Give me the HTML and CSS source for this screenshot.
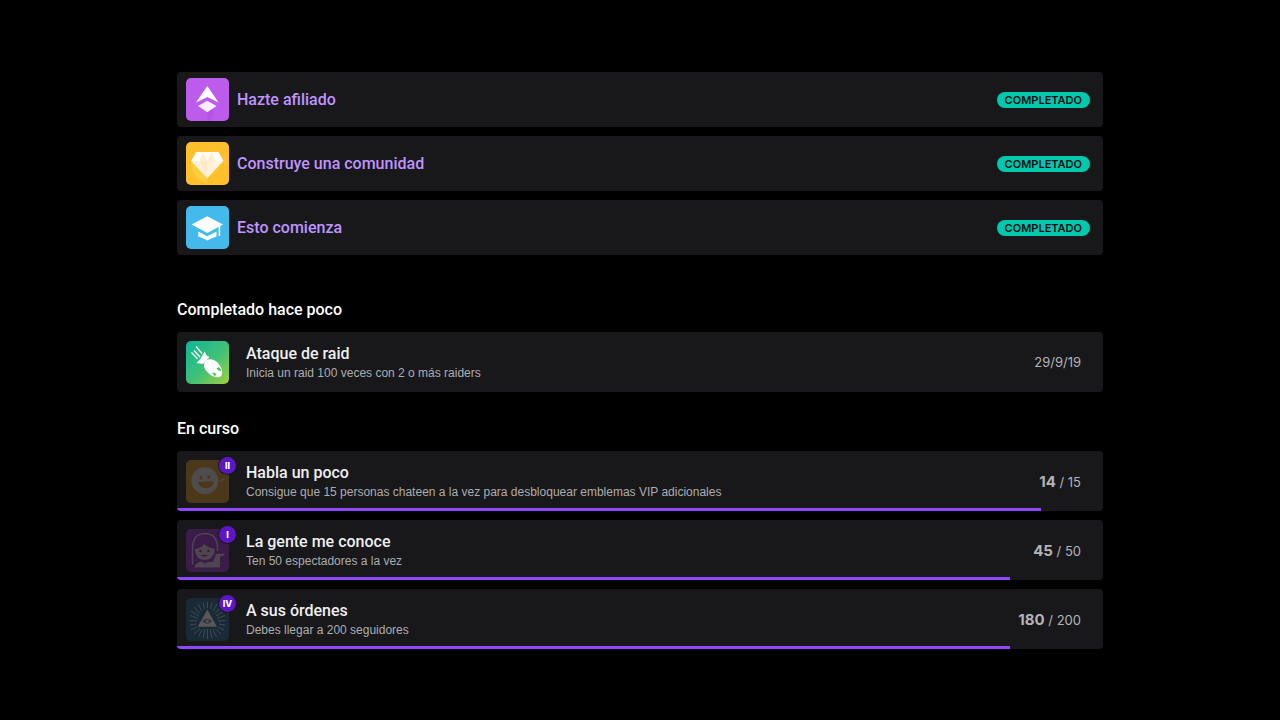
FILE: index.html
```html
<!DOCTYPE html>
<html lang="es">
<head>
    <meta charset="UTF-8">
    <meta name="viewport" content="width=device-width, initial-scale=1.0">
    <title>Logros</title>
    <link rel="stylesheet" href="styles.css">
</head>
<body>
    <main class="container">
        <section class="card-list quests">
            <article class="card quest">
                <svg class="icon" viewBox="0 0 43 43" aria-hidden="true">
                    <rect width="43" height="43" rx="5" fill="#bd5bed"/>
                    <path d="M21.3 34.3L27 31Q29 38 24 43H21.3z" fill="#b453e5"/>
                    <path d="M21.3 8L32.6 24.4L21.3 19L10 24.4z" fill="#fff"/>
                    <path d="M21.3 22.7L30.6 28L21.3 34.3L12 28z" fill="#f8ecff"/>
                </svg>
                <a href="#afiliado" class="quest-title">Hazte afiliado</a>
                <span class="tag">COMPLETADO</span>
            </article>
            <article class="card quest">
                <svg class="icon" viewBox="0 0 43 43" aria-hidden="true">
                    <rect width="43" height="43" rx="5" fill="#ffc02b"/>
                    <path d="M5 19L21.3 36V41Q6 38 5 19z" fill="#ffce3e"/>
                    <path d="M10.3 10H32.3L37.3 19L21.3 36.3L5.3 19z" fill="#fff4df"/>
                    <path d="M10.3 10H17L13.5 19H5.3zM25.6 10H32.3L37.3 19H29z" fill="#fff"/>
                    <path d="M13.5 19L17 10L21.3 19zM21.3 19L25.6 10L29 19z" fill="#ffefd2"/>
                    <path d="M17 10H25.6L21.3 19z" fill="#fffaf2"/>
                    <path d="M5.3 19H13.5L21.3 36.3z" fill="#fff1d8"/>
                    <path d="M13.5 19H21.3V36.3z" fill="#ffe9c8"/>
                    <path d="M21.3 19H29L21.3 36.3z" fill="#fff0d6"/>
                </svg>
                <a href="#comunidad" class="quest-title">Construye una comunidad</a>
                <span class="tag">COMPLETADO</span>
            </article>
            <article class="card quest">
                <svg class="icon" viewBox="0 0 43 43" aria-hidden="true">
                    <rect width="43" height="43" rx="5" fill="#43baeb"/>
                    <path d="M5.5 18.5L21.3 10.3L37 18.5L21.3 27z" fill="#fff"/>
                    <path d="M12.3 25.4L21.3 30.2L30.5 25.4V30.6Q26 32 21.3 34.4Q17 32 12.3 30.6z" fill="#fff"/>
                    <path d="M33.4 19.5V30" stroke="#fff" stroke-width="1.6"/>
                </svg>
                <a href="#comienza" class="quest-title">Esto comienza</a>
                <span class="tag">COMPLETADO</span>
            </article>
        </section>

        <section>
            <h2>Completado hace poco</h2>
            <div class="card-list">
                <article class="card">
                    <svg class="icon" viewBox="0 0 43 43" aria-hidden="true">
                        <defs>
                            <linearGradient id="raid" x1="0" y1="0" x2="1" y2="1">
                                <stop offset="0" stop-color="#0cb797"/>
                                <stop offset=".55" stop-color="#42c176"/>
                                <stop offset="1" stop-color="#a4d03c"/>
                            </linearGradient>
                        </defs>
                        <rect width="43" height="43" rx="5" fill="url(#raid)"/>
                        <path d="M10 5.5L16 12.5M8 9.5L14 16M5.5 11.5L11.5 17.7" stroke="#fff" stroke-width="1.3" fill="none"/>
                        <path d="M18.5 10.5L20.5 14.5L23.5 16L17 23L10.5 22L14.5 17.7z" fill="#fff"/>
                        <path d="M18.5 21.5Q20 18 24 18.3Q28.5 18.5 32 22Q36 26.5 36 31Q36 35 34 35.8Q28.5 37.5 24.5 34L20 29.5Q17 26 18.5 21.5z" fill="#fff"/>
                        <path d="M27.5 36.5L28 34L26 32L28.5 31.5L30.5 33.5zM35.5 30L32 29.5L30.5 27.5L32.5 26L34 27z" fill="#57c46b"/>
                    </svg>
                    <div class="info">
                        <h3>Ataque de raid</h3>
                        <p>Inicia un raid 100 veces con 2 o más raiders</p>
                    </div>
                    <time class="date" datetime="2019-09-29">29/9/19</time>
                </article>
            </div>
        </section>

        <section>
            <h2>En curso</h2>
            <div class="card-list">
                <article class="card">
                    <div class="icon-wrap">
                        <svg class="icon" viewBox="0 0 43 43" aria-hidden="true">
                            <rect width="43" height="43" rx="5" fill="#4b381a"/>
                            <circle cx="18.8" cy="20.7" r="13.5" fill="#4e4c4d"/>
                            <ellipse cx="15" cy="17.7" rx="1.4" ry="2" fill="#4b381a"/>
                            <ellipse cx="23" cy="17" rx="1.4" ry="2" fill="#4b381a"/>
                            <path d="M11.5 22.3L28 21Q27.5 27.5 20.5 28.3Q14 28.3 11.5 22.3z" fill="#4b381a"/>
                            <path d="M34 20.8L38.5 19.4" stroke="#4e4c4d" stroke-width="1.2"/>
                        </svg>
                        <span class="badge">II</span>
                    </div>
                    <div class="info">
                        <h3>Habla un poco</h3>
                        <p>Consigue que 15 personas chateen a la vez para desbloquear emblemas VIP adicionales</p>
                    </div>
                    <div class="count"><strong>14</strong> / 15</div>
                    <progress value="14" max="15" aria-label="Habla un poco"></progress>
                </article>
                <article class="card">
                    <div class="icon-wrap">
                        <svg class="icon" viewBox="0 0 43 43" aria-hidden="true">
                            <rect width="43" height="43" rx="5" fill="#3b1b47"/>
                            <path d="M6.5 36V18Q7.5 4.5 19 4.5T31.5 18V22" fill="none" stroke="#4d4351" stroke-width="1.5"/>
                            <path d="M9 20Q16 18.5 18 15Q22 19 28.5 19.5V22.5Q26.5 31 18.5 31T9 22z" fill="#4e454f"/>
                            <path d="M8.5 38.5Q9 33.5 15.5 32.5L18.5 34.5L22 33H27L29.5 27V25L39 24.5Q38 27.5 34 27.5V38.5z" fill="#4e454f"/>
                            <circle cx="14.5" cy="22" r="1.3" fill="#3b1b47"/>
                            <circle cx="22.5" cy="22" r="1.3" fill="#3b1b47"/>
                            <path d="M15 26Q18.5 29.5 22 26z" fill="#3b1b47"/>
                        </svg>
                        <span class="badge">I</span>
                    </div>
                    <div class="info">
                        <h3>La gente me conoce</h3>
                        <p>Ten 50 espectadores a la vez</p>
                    </div>
                    <div class="count"><strong>45</strong> / 50</div>
                    <progress value="45" max="50" aria-label="La gente me conoce"></progress>
                </article>
                <article class="card">
                    <div class="icon-wrap">
                        <svg class="icon" viewBox="0 0 43 43" aria-hidden="true">
                            <rect width="43" height="43" rx="5" fill="#192a36"/>
                            <path stroke="#404b54" stroke-width="1" d="M21.5 4V10M17 4.5L18.5 11M26 4.5L24.5 11M12 6L16 13M31 6L27 13M8 9L14 15.5M35 9L29 15.5M5 13L13 18M38 13L30 18M4 17.5L12 20.5M39 17.5L31 20.5M3.5 22.5L11 23M39.5 22.5L32 23M4 27L10 26M39 27L33 26M5 32L11 29M38 32L32 29M8 36L14 30.5M35 36L29 30.5M12.5 38.5L16.5 31M30.5 38.5L26.5 31M17 40L19 31M26 40L24 31M21.5 41V31"/>
                            <path d="M21.3 11.5L31 28.7H11.7z" fill="#5b5659"/>
                            <path d="M16.5 23.3Q21.3 18.5 26 23.3Q21.3 28 16.5 23.3z" fill="#2a323a"/>
                            <circle cx="21.3" cy="23.3" r="1.5" fill="#5b5659"/>
                        </svg>
                        <span class="badge">IV</span>
                    </div>
                    <div class="info">
                        <h3>A sus órdenes</h3>
                        <p>Debes llegar a 200 seguidores</p>
                    </div>
                    <div class="count"><strong>180</strong> / 200</div>
                    <progress value="180" max="200" aria-label="A sus órdenes"></progress>
                </article>
            </div>
        </section>
    </main>
</body>
</html>
```
FILE: styles.css
```css
* {
    box-sizing: border-box;
}
body {
    font-family: "Liberation Sans", Arial, sans-serif;
    margin: 0;
    padding: 72px 24px;
    background: #000;
    color: #efeff1;
}
.container {
    max-width: 926px;
    margin: 0 auto;
}
.card-list {
    display: flex;
    flex-direction: column;
    gap: 9px;
}
.card {
    position: relative;
    display: flex;
    align-items: center;
    min-height: 60px;
    padding: 0 22px 0 9px;
    background: #18181b;
    border-radius: 4px;
    overflow: hidden;
}
.quest {
    min-height: 55px;
    padding-right: 13px;
}
.quests {
    margin-bottom: 45px;
}
.icon {
    display: block;
    width: 43px;
    height: 43px;
    flex-shrink: 0;
}
.icon-wrap {
    position: relative;
}
h2,
h3,
.quest-title {
    margin: 0;
    font-family: Roboto, "Liberation Sans", sans-serif;
    font-size: 16px;
    font-weight: 500;
    line-height: 20px;
}
h2 {
    margin-bottom: 12px;
    color: #fff;
}
.quest-title {
    flex: 1;
    margin-left: 8px;
    color: #bf94ff;
    text-decoration: none;
}
section + section {
    margin-top: 27px;
}
.info {
    flex: 1;
    margin-left: 17px;
    padding-top: 2px;
}
p {
    margin: 0;
    font-size: 12px;
    line-height: 18px;
    color: #adadb0;
}
.tag,
.date,
.count,
.badge {
    font-family: Inter, "Liberation Sans", sans-serif;
}
.tag {
    padding: 0 8px;
    border-radius: 8px;
    background: #00c8af;
    color: #0e0e10;
    font-size: 11px;
    font-weight: 600;
    line-height: 16px;
}
.date,
.count {
    font-size: 13px;
    color: #b4b4b8;
}
.count strong {
    font-size: 15px;
    font-weight: 700;
}
.badge {
    position: absolute;
    top: -3px;
    right: -7px;
    width: 17px;
    height: 17px;
    border-radius: 50%;
    background: #5c16c5;
    box-shadow: 0 0 0 1px #18181b;
    color: #fff;
    font-size: 9px;
    font-weight: 800;
    line-height: 17px;
    text-align: center;
}
progress {
    appearance: none;
    position: absolute;
    left: 0;
    bottom: 0;
    width: 100%;
    height: 3px;
    border: none;
    background: transparent;
}
progress::-webkit-progress-bar {
    background: transparent;
}
progress::-webkit-progress-value {
    background: #9147ff;
}
```
